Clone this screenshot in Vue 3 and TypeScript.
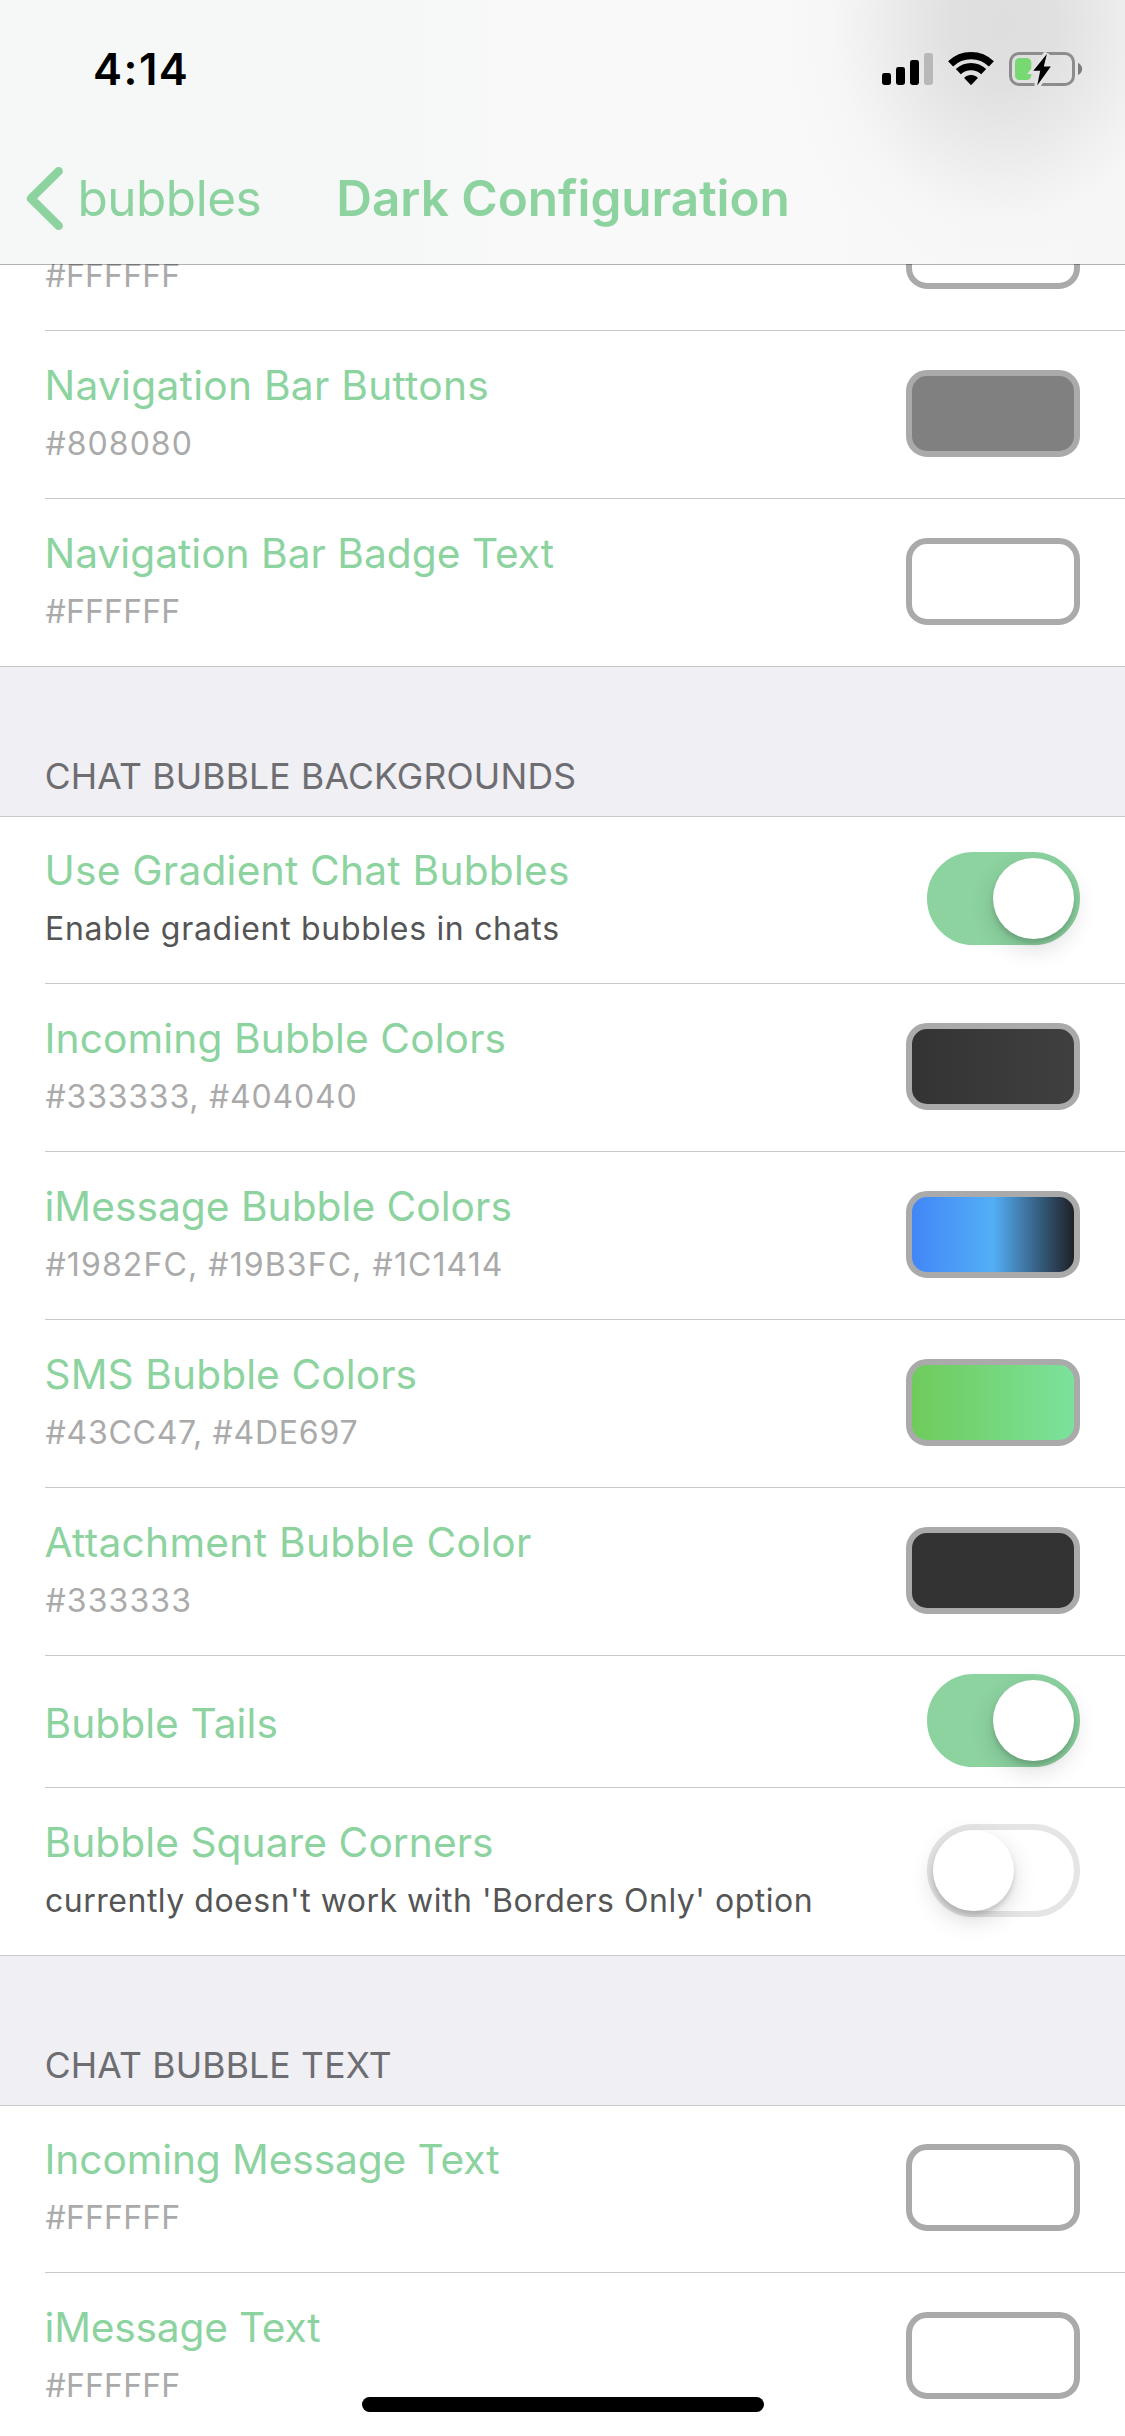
<script setup lang="ts">
import { reactive } from 'vue'

interface Row {
  title?: string
  titleTracking?: number
  detail?: string
  detailTracking?: number
  note?: boolean
  swatch?: string
  toggle?: boolean
}

interface Section {
  heading?: string
  rows: Row[]
}

const sections = reactive<Section[]>([
  {
    rows: [
      { detail: '#FFFFFF', detailTracking: 0.18, swatch: '#ffffff' },
      { title: 'Navigation Bar Buttons', titleTracking: 0.27, detail: '#808080', detailTracking: 1.02, swatch: '#808080' },
      { title: 'Navigation Bar Badge Text', titleTracking: 0.01, detail: '#FFFFFF', detailTracking: 0.18, swatch: '#ffffff' },
    ],
  },
  {
    heading: 'CHAT BUBBLE BACKGROUNDS',
    rows: [
      { title: 'Use Gradient Chat Bubbles', titleTracking: 0.22, detail: 'Enable gradient bubbles in chats', detailTracking: 0.68, note: true, toggle: true },
      { title: 'Incoming Bubble Colors', titleTracking: 0.11, detail: '#333333, #404040', detailTracking: 0.8, swatch: 'linear-gradient(90deg, #333333, #404040)' },
      { title: 'iMessage Bubble Colors', titleTracking: 0.02, detail: '#1982FC, #19B3FC, #1C1414', detailTracking: 1.1, swatch: 'linear-gradient(90deg, #4083f6, #53aff7 50%, #1b1616)' },
      { title: 'SMS Bubble Colors', titleTracking: 0.09, detail: '#43CC47, #4DE697', detailTracking: 0.74, swatch: 'linear-gradient(90deg, #6eca59, #7ce39e)' },
      { title: 'Attachment Bubble Color', titleTracking: 0.28, detail: '#333333', detailTracking: 1.1, swatch: '#333333' },
      { title: 'Bubble Tails', titleTracking: 0.05, toggle: true },
      { title: 'Bubble Square Corners', titleTracking: 0.06, detail: "currently doesn't work with 'Borders Only' option", detailTracking: 0.51, note: true, toggle: false },
    ],
  },
  {
    heading: 'CHAT BUBBLE TEXT',
    rows: [
      { title: 'Incoming Message Text', titleTracking: -0.11, detail: '#FFFFFF', detailTracking: 0.18, swatch: '#ffffff' },
      { title: 'iMessage Text', titleTracking: -0.2, detail: '#FFFFFF', detailTracking: 0.18, swatch: '#ffffff' },
    ],
  },
])

const tracking = (value = 0) => ({ letterSpacing: `${value}px` })
</script>

<template>
  <div class="screen">
    <main class="list">
      <section v-for="(section, s) in sections" :key="s" class="section">
        <h2 v-if="section.heading" class="heading">{{ section.heading }}</h2>
        <div class="rows">
          <div
            v-for="(row, r) in section.rows"
            :key="r"
            class="row"
            :class="{ short: !row.detail, first: section.heading && r === 0 }"
          >
            <div class="labels">
              <div v-if="row.title" class="title" :style="tracking(row.titleTracking)">{{ row.title }}</div>
              <div v-if="row.detail" class="detail" :class="{ note: row.note }" :style="tracking(row.detailTracking)">{{ row.detail }}</div>
            </div>
            <div v-if="row.swatch" class="swatch" :style="{ background: row.swatch }"></div>
            <button
              v-else
              type="button"
              class="toggle"
              :class="{ on: row.toggle }"
              role="switch"
              :aria-checked="row.toggle"
              @click="row.toggle = !row.toggle"
            >
              <span class="knob"></span>
            </button>
          </div>
        </div>
      </section>
    </main>

    <header class="navbar">
      <div class="status">
        <span class="time">4:14</span>
        <span class="indicators">
          <svg class="signal" width="51" height="34" viewBox="0 0 51 34">
            <rect x="0" y="21" width="9" height="12" rx="2.4" />
            <rect x="14" y="15" width="9" height="18" rx="2.4" />
            <rect x="28" y="8" width="9" height="25" rx="2.4" />
            <rect x="42" y="1" width="9" height="32" rx="2.4" fill="#b8b8b8" />
          </svg>
          <svg class="wifi" width="46" height="34" viewBox="0 0 46 34">
            <g fill="none" stroke="#000">
              <path d="M2.6 11.9A29.3 29.3 0 0 1 43.4 11.9" stroke-width="7.2" />
              <path d="M10.3 19.7A18.4 18.4 0 0 1 35.7 19.7" stroke-width="7.2" />
            </g>
            <path d="M16.2 26.1C16.2 25.4 19.2 23 23 23S29.8 25.4 29.8 26.1L23.7 32.6Q23 33.3 22.3 32.6Z" />
          </svg>
          <svg class="battery" width="74" height="36" viewBox="0 0 74 36">
            <rect x="1.5" y="2.5" width="63" height="31" rx="8.5" fill="none" stroke="#8c8c8c" stroke-width="3" />
            <rect x="6" y="7" width="16.3" height="22" rx="4.5" fill="#78d872" />
            <path d="M69 12C71 12.8 73.2 15 73.2 18S71 23.2 69 24Z" fill="#7c7c7c" />
            <path d="M37.8 2.5L24.3 20H31.2L28.2 35L41.8 15H34.8Z" fill="#e3e3e3" stroke="#e3e3e3" stroke-width="6" />
            <path d="M37.9 3L24.3 19.8H31.2L28.2 34.4L41.8 15.4H34.8Z" />
          </svg>
        </span>
      </div>
      <nav class="titlebar">
        <a class="back">
          <svg width="42" height="66" viewBox="0 0 42 66">
            <path d="M36.6 6.3L9 33.5L36.6 60.7" fill="none" stroke="#8cd3a0" stroke-width="8.6" stroke-linecap="round" stroke-linejoin="round" />
          </svg>
          <span>bubbles</span>
        </a>
        <h1>Dark Configuration</h1>
      </nav>
    </header>

    <div class="home-indicator"></div>
  </div>
</template>

<style>
body {
  background: #fff;
}
</style>

<style scoped>
.screen {
  position: relative;
  width: 1125px;
  height: 2436px;
  overflow: hidden;
  background: #fff;
  font-family: Inter, "Liberation Sans", sans-serif;
}

.list {
  padding-top: 163px;
}

.heading {
  box-sizing: border-box;
  height: 150px;
  margin: 0;
  padding: 88px 0 0 44.7px;
  border-bottom: 1px solid #c8c7cc;
  background: #efeff4;
  color: #6d6d72;
  font-size: 35.5px;
  font-weight: 400;
  line-height: 43px;
  letter-spacing: 0.18px;
}

.row {
  position: relative;
  box-sizing: border-box;
  display: flex;
  justify-content: space-between;
  align-items: flex-end;
  height: 168px;
  padding: 0 45px 0 44.5px;
  white-space: nowrap;
}

.row.first {
  height: 167px;
}

.row.short {
  height: 132px;
}

/* Hairline separators start at the text inset, the last one runs edge to edge. */
.row::after {
  content: "";
  position: absolute;
  left: 45px;
  right: 0;
  bottom: 0;
  height: 1px;
  background: #c8c7cc;
}

.row:last-child::after {
  left: 0;
}

.labels {
  padding-bottom: 36px;
}

.short .labels {
  padding-bottom: 40px;
}

.title {
  color: #8cd3a0;
  font-size: 40.7px;
  line-height: 49px;
}

.detail {
  margin: 14px 0 0 1px;
  color: #aaa;
  font-size: 32px;
  line-height: 39px;
}

.detail.note {
  margin-left: 0.5px;
  color: #555;
}

.swatch {
  box-sizing: border-box;
  width: 174px;
  height: 87px;
  margin-bottom: 42px;
  border: 6px solid #aaa;
  border-radius: 21px;
  background-origin: border-box !important;
}

.toggle {
  box-sizing: border-box;
  display: flex;
  width: 153px;
  height: 93px;
  margin: 0 0 39px;
  padding: 0;
  border: 6px solid #e5e5e5;
  border-radius: 47px;
  background: #fff;
}

.short .toggle {
  margin-bottom: 21px;
}

.toggle.on {
  justify-content: flex-end;
  border-color: #8cd3a0;
  background: #8cd3a0;
}

.knob {
  width: 81px;
  height: 81px;
  border-radius: 50%;
  background: #fff;
  box-shadow: 0 9px 24px rgba(0, 0, 0, 0.15), 0 4px 5px rgba(0, 0, 0, 0.14);
}

.navbar {
  position: absolute;
  inset: 0 0 auto 0;
  height: 264px;
  border-bottom: 1px solid rgba(0, 0, 0, 0.3);
  background:
    radial-gradient(ellipse 185px 215px at 1003px 25px, #dedede 0%, #e0e0e0 28%, #e9e9e9 54%, #f1f1f1 76%, rgba(246, 246, 246, 0.9) 92%, rgba(248, 248, 248, 0) 120%),
    linear-gradient(90deg, #f6f8f7 0%, #f6f8f7 35%, #f9f9f9 52%, #f9f9f9 70%, #f6f6f6 100%);
  background-clip: padding-box;
}

.status {
  display: flex;
  justify-content: space-between;
  align-items: flex-start;
  height: 132px;
  padding: 0 42px 0 93px;
}

.time {
  margin-top: 43px;
  color: #000;
  font-size: 43.6px;
  font-weight: 600;
  line-height: 53px;
  letter-spacing: 1.5px;
}

.indicators {
  display: flex;
  align-items: flex-start;
  margin-top: 52px;
}

.signal {
  margin-right: 15px;
}

.wifi {
  margin-right: 15px;
}

.battery {
  margin-top: -1px;
}

.titlebar {
  position: relative;
  display: flex;
  align-items: center;
  height: 132px;
}

.back {
  display: flex;
  align-items: center;
  margin-left: 22px;
  color: #8cd3a0;
  font-size: 49.5px;
  line-height: 60px;
  letter-spacing: -0.48px;
}

.back span {
  margin-left: 13.4px;
}

.titlebar h1 {
  margin: 0 0 0 75px;
  color: #8cd3a0;
  font-size: 49.5px;
  font-weight: 600;
  line-height: 60px;
  letter-spacing: -0.04px;
}

.home-indicator {
  position: absolute;
  left: 362px;
  bottom: 24px;
  width: 402px;
  height: 15px;
  border-radius: 8px;
  background: #000;
}
</style>
